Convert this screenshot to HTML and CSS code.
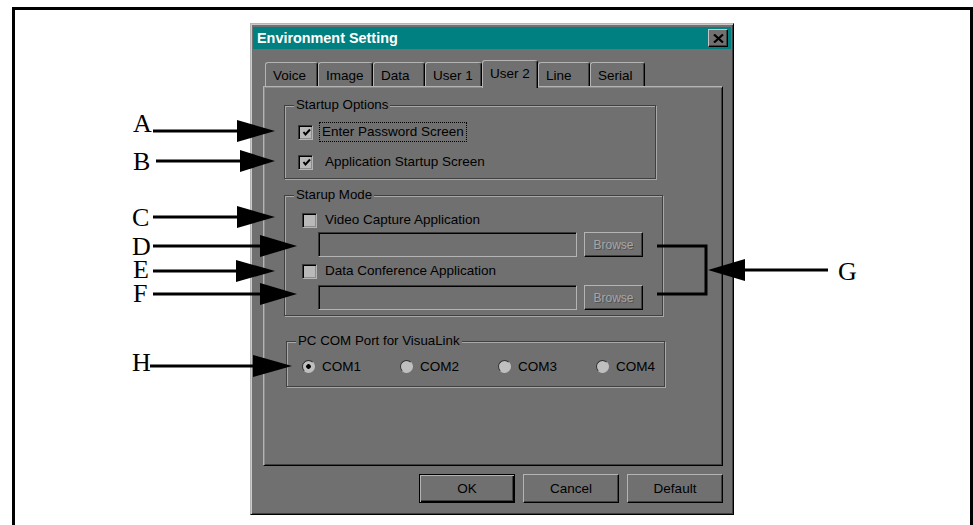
FILE: index.html
```html
<!DOCTYPE html>
<html>
<head>
<meta charset="utf-8">
<title>Environment Setting</title>
<link rel="stylesheet" href="styles.css">
</head>
<body>
<div class="frame">
  <div class="dialog">
    <div class="titlebar">
      <span class="title">Environment Setting</span>
      <span class="close"><svg width="11" height="9" viewBox="0 0 11 9"><path d="M1 0.5 L10 8.5 M10 0.5 L1 8.5" stroke="#000" stroke-width="2.2"/></svg></span>
    </div>
    <div class="tabs">
      <span class="tab w53">Voice</span>
      <span class="tab w55">Image</span>
      <span class="tab w52">Data</span>
      <span class="tab w57">User 1</span>
      <span class="tab tab-active w56">User 2</span>
      <span class="tab w52">Line</span>
      <span class="tab w55">Serial</span>
    </div>
    <div class="panel">
      <div class="group g-opts">
        <span class="legend">Startup Options</span>
        <div class="row check r-first">
          <span class="box"><svg width="9" height="9" viewBox="0 0 9 9"><polyline points="1.5,4 3.5,6.5 8,1.5" fill="none" stroke="#000" stroke-width="2"/></svg></span>
          <span class="label focus">Enter Password Screen</span>
        </div>
        <div class="row check r-next">
          <span class="box"><svg width="9" height="9" viewBox="0 0 9 9"><polyline points="1.5,4 3.5,6.5 8,1.5" fill="none" stroke="#000" stroke-width="2"/></svg></span>
          <span class="label label-b">Application Startup Screen</span>
        </div>
      </div>
      <div class="group g-mode">
        <span class="legend">Starup Mode</span>
        <div class="row check r-c">
          <span class="box"></span>
          <span class="label">Video Capture Application</span>
        </div>
        <div class="row fieldrow r-f1">
          <span class="field"></span>
          <span class="browse">Browse</span>
        </div>
        <div class="row check r-e">
          <span class="box"></span>
          <span class="label">Data Conference Application</span>
        </div>
        <div class="row fieldrow r-f2">
          <span class="field"></span>
          <span class="browse">Browse</span>
        </div>
      </div>
      <div class="group g-com">
        <span class="legend">PC COM Port for VisuaLink</span>
        <div class="row radios">
          <span class="radio-item"><span class="radio on"></span>COM1</span>
          <span class="radio-item"><span class="radio"></span>COM2</span>
          <span class="radio-item"><span class="radio"></span>COM3</span>
          <span class="radio-item"><span class="radio"></span>COM4</span>
        </div>
      </div>
    </div>
    <div class="buttons">
      <span class="btn btn-default">OK</span>
      <span class="btn">Cancel</span>
      <span class="btn">Default</span>
    </div>
  </div>
</div>

<svg class="callouts" width="973" height="525" viewBox="0 0 973 525">
  <g class="letters">
    <text x="133" y="132">A</text>
    <text x="133" y="170">B</text>
    <text x="132" y="226">C</text>
    <text x="132" y="255">D</text>
    <text x="133" y="278">E</text>
    <text x="133" y="302">F</text>
    <text x="132" y="371">H</text>
    <text x="838" y="280">G</text>
  </g>
  <g stroke="#000" stroke-width="3" fill="none">
    <line x1="153" y1="131" x2="240" y2="131"/>
    <line x1="156" y1="161" x2="242" y2="161"/>
    <line x1="153" y1="217" x2="240" y2="217"/>
    <line x1="153" y1="246" x2="262" y2="246"/>
    <line x1="153" y1="271" x2="240" y2="271"/>
    <line x1="153" y1="294" x2="262" y2="294"/>
    <line x1="150" y1="366" x2="256" y2="366"/>
    <line x1="742" y1="270" x2="828" y2="270"/>
    <polyline points="657,246 706,246 706,294 657,294"/>
  </g>
  <g fill="#000">
    <polygon points="237,120 275,131 237,142"/>
    <polygon points="240,150 275,161 240,172"/>
    <polygon points="237,206 275,217 237,228"/>
    <polygon points="260,235 297,246 260,257"/>
    <polygon points="236,260 275,271 236,282"/>
    <polygon points="260,283 297,294 260,305"/>
    <polygon points="253,355 292,366 253,377"/>
    <polygon points="745,259 708,270 745,281"/>
  </g>
</svg>
</body>
</html>
```

FILE: styles.css
```css
html, body {
  margin: 0;
  height: 525px;
  overflow: hidden;
  background: #fff;
}

body {
  position: relative;
  font-family: "Liberation Sans", Arial, sans-serif;
  color: #000;
}

.frame {
  margin: 7px 0 0 12px;
  width: 955px;
  height: 530px;
  border: 3px solid #000;
  border-bottom: 0;
}

.dialog {
  margin: 13px 0 0 235px;
  width: 484px;
  height: 492px;
  box-sizing: border-box;
  background: #707070;
  border: 1px solid;
  border-color: #b4b4b4 #000 #000 #b4b4b4;
  box-shadow: inset 1px 1px 0 #cbcbcb, inset -1px -1px 0 #404040;
  padding: 3px 2px 0 2px;
  display: flex;
  flex-direction: column;
}

.titlebar {
  height: 22px;
  flex: none;
  background: #008080;
  display: flex;
  align-items: center;
  justify-content: space-between;
  padding: 0 3px 0 4px;
}

.title {
  color: #fff;
  font-weight: bold;
  font-size: 14.4px;
  line-height: 16px;
}

.close {
  width: 20px;
  height: 18px;
  box-sizing: border-box;
  background: #707070;
  border: 1px solid;
  border-color: #c4c4c4 #000 #000 #c4c4c4;
  box-shadow: inset -1px -1px 0 #404040;
  display: flex;
  align-items: center;
  justify-content: center;
}

.close svg {
  display: block;
}

.tabs {
  margin: 11px 0 0 12px;
  height: 26px;
  display: flex;
  align-items: flex-end;
  position: relative;
  z-index: 1;
}

.tab {
  height: 24px;
  box-sizing: border-box;
  background: #707070;
  border-top: 1px solid #b4b4b4;
  border-left: 1px solid #b4b4b4;
  border-right: 1px solid #000;
  border-radius: 3px 3px 0 0;
  box-shadow: inset -1px 0 0 #404040;
  padding: 2px 0 0 7px;
  font-size: 13.5px;
  display: flex;
  align-items: center;
}

.tab-active {
  height: 28px;
  margin-bottom: -2px;
  padding-top: 0;
  padding-bottom: 2px;
}

.w52 { width: 52px; }
.w53 { width: 53px; }
.w55 { width: 55px; }
.w56 { width: 56px; }
.w57 { width: 57px; }

.panel {
  margin-left: 10px;
  width: 460px;
  height: 380px;
  box-sizing: border-box;
  flex: none;
  border: 1px solid;
  border-color: #b4b4b4 #000 #000 #b4b4b4;
  box-shadow: inset 1px 1px 0 #8a8a8a, inset -1px -1px 0 #404040;
  display: flex;
  flex-direction: column;
  align-items: flex-start;
}

.group {
  box-sizing: border-box;
  border: 1px solid #404040;
  box-shadow: inset 1px 1px 0 #a8a8a8, 1px 1px 0 #a8a8a8;
  display: flex;
  flex-direction: column;
  align-items: flex-start;
}

.legend {
  margin: -8px 0 0 9px;
  padding: 0 2px;
  background: #707070;
  font-size: 13.3px;
  line-height: 14px;
}

.g-opts {
  margin: 18px 0 0 20px;
  width: 372px;
  padding-bottom: 6px;
}

.g-mode {
  margin: 16px 0 0 20px;
  width: 379px;
  padding-bottom: 5px;
}

.g-com {
  margin: 25px 0 0 22px;
  width: 379px;
  padding-bottom: 10px;
}

.row {
  display: flex;
  align-items: center;
  font-size: 13.5px;
}

.check {
  height: 20px;
}

.g-opts .check { margin-left: 13px; }
.g-mode .check { margin-left: 17px; }

.r-first { margin-top: 10px; }
.r-next { margin-top: 10px; }
.r-c { margin-top: 8px; }
.r-f1 { margin-top: 2px; }
.r-e { margin-top: 4px; }
.r-f2 { margin-top: 4px; }

.box {
  width: 15px;
  height: 15px;
  box-sizing: border-box;
  border: 1px solid;
  border-color: #383838 #b4b4b4 #b4b4b4 #383838;
  box-shadow: inset 1px 1px 0 #000, inset -1px -1px 0 #8c8c8c;
  background: #b9b9b9;
  display: flex;
  align-items: center;
  justify-content: center;
  flex: none;
}

.box svg {
  display: block;
  margin: 1px 0 0 1px;
}

.label {
  margin-left: 5px;
  padding: 1px 2px;
  border: 1px solid transparent;
  line-height: 16px;
}

.g-opts .label { margin-left: 6px; }
.g-opts .label-b { margin-left: 9px; }

.focus {
  border: 1px dotted #000;
}

.fieldrow {
  margin-left: 33px;
  gap: 7px;
}

.field {
  width: 259px;
  height: 25px;
  box-sizing: border-box;
  border: 1px solid;
  border-color: #383838 #b4b4b4 #b4b4b4 #383838;
  box-shadow: inset 1px 1px 0 #000;
  background: #707070;
}

.browse {
  width: 59px;
  height: 25px;
  box-sizing: border-box;
  border: 1px solid;
  border-color: #b4b4b4 #000 #000 #b4b4b4;
  box-shadow: inset -1px -1px 0 #404040;
  display: flex;
  align-items: center;
  justify-content: center;
  font-size: 12px;
  color: #a6a6a6;
  text-shadow: 1px 1px 0 #545454;
}

.radios {
  margin: 8px 0 0 15px;
  height: 20px;
}

.radio-item {
  width: 98px;
  display: flex;
  align-items: center;
}

.radio {
  width: 13px;
  height: 13px;
  box-sizing: border-box;
  border-radius: 50%;
  border: 1px solid;
  border-color: #303030 #c0c0c0 #c0c0c0 #303030;
  background: #bfbfbf;
  margin-right: 7px;
  flex: none;
}

.radio.on {
  background: radial-gradient(circle, #000 0 2px, #bfbfbf 2.6px);
}

.buttons {
  margin: 8px 8px 0 0;
  display: flex;
  justify-content: flex-end;
  gap: 8px;
}

.btn {
  width: 96px;
  height: 29px;
  box-sizing: border-box;
  border: 1px solid;
  border-color: #b4b4b4 #000 #000 #b4b4b4;
  box-shadow: inset -1px -1px 0 #404040;
  display: flex;
  align-items: center;
  justify-content: center;
  font-size: 13.5px;
}

.btn-default {
  border: 1px solid #000;
  box-shadow: inset 1px 1px 0 #b4b4b4, inset -1px -1px 0 #000, inset -2px -2px 0 #404040;
}

.callouts {
  position: absolute;
  left: 0;
  top: 0;
  pointer-events: none;
}

.letters text {
  font-family: "Liberation Serif", "Times New Roman", serif;
  font-size: 26px;
  fill: #000;
}
```
